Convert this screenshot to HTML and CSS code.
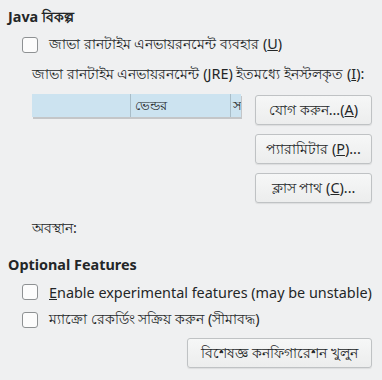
FILE: index.html
```html
<html>
<head>
	<title>Java Options</title>
	<link rel="stylesheet" href="styles.css">
</head>
<body>
	<div class="page">
		<div class="section-title">Java বিকল্প</div>

		<div class="check-row first">
			<span class="checkbox"></span>
			<span>জাভা রানটাইম এনভায়রনমেন্ট ব্যবহার (<u>U</u>)</span>
		</div>

		<div class="indent">
			<div class="jre-label">জাভা রানটাইম এনভায়রনমেন্ট (JRE) ইতমধ্যে ইনস্টলকৃত (<u>I</u>):</div>

			<div class="jre-area">
				<div class="jre-table">
					<div class="col col-first"></div>
					<div class="col col-vendor">ভেন্ডর</div>
					<div class="col col-last">স</div>
				</div>
				<div class="button-column">
					<div class="button">যোগ করুন...(<u>A</u>)</div>
					<div class="button">প্যারামিটার (<u>P</u>)...</div>
					<div class="button">ক্লাস পাথ (<u>C</u>)...</div>
				</div>
			</div>

			<div class="location">অবস্থান:</div>
		</div>

		<div class="section-title second">Optional Features</div>

		<div class="check-row">
			<span class="checkbox"></span>
			<span><u>E</u>nable experimental features (may be unstable)</span>
		</div>
		<div class="check-row">
			<span class="checkbox"></span>
			<span>ম্যাক্রো রেকর্ডিং সক্রিয় করুন (সীমাবদ্ধ)</span>
		</div>

		<div class="bottom-row">
			<div class="button wide">বিশেষজ্ঞ কনফিগারেশন খুলুন</div>
		</div>
	</div>
</body>
</html>
```

FILE: styles.css
```css
html, body {
	margin: 0;
	padding: 0;
	background-color: #eff0f1;
}

.page {
	font-family: "Noto Sans", "Open Sans", sans-serif;
	font-size: 14.4px;
	color: #232627;
	padding: 5px 10px 0 8px;
	width: 364px;
	height: 375px;
	overflow: hidden;
}

.section-title {
	font-weight: bold;
	height: 24px;
	line-height: 24px;
}

.section-title.second {
	margin-top: 14px;
	height: 25px;
}

.check-row {
	display: flex;
	align-items: center;
	height: 28px;
	padding-left: 14px;
}

.check-row.first {
	height: 32px;
}

.checkbox {
	width: 14px;
	height: 14px;
	border: 1px solid #8e9193;
	border-radius: 3px;
	background-color: #fcfcfc;
	margin-right: 11px;
	flex: none;
}

.indent {
	padding-left: 24px;
}

.jre-label {
	height: 26px;
	line-height: 26px;
}

.jre-area {
	display: flex;
	justify-content: space-between;
	margin-top: 7px;
}

.jre-table {
	display: flex;
	width: 209px;
	height: 23px;
	background-color: #cce3f0;
	box-shadow: 1px 2px 0 #c4c6c8;
	font-size: 12.5px;
	line-height: 23px;
}

.col {
	border-right: 1px solid #a9bdc8;
	overflow: hidden;
	white-space: nowrap;
}

.col-first {
	width: 98px;
}

.col-vendor {
	width: 95px;
	padding-left: 4px;
}

.col-last {
	border-right: none;
	padding-left: 2px;
	flex: 1;
}

.button-column {
	display: flex;
	flex-direction: column;
	gap: 9px;
	margin-top: 1px;
}

.button {
	width: 115px;
	height: 28px;
	line-height: 28px;
	text-align: center;
	border: 1px solid #bfc2c4;
	border-radius: 3px;
	background: linear-gradient(#f6f7f7, #eceded);
	box-shadow: 0 1px 1px rgba(0, 0, 0, 0.08);
}

.location {
	margin-top: 14px;
	height: 22px;
	line-height: 22px;
}

.bottom-row {
	display: flex;
	justify-content: flex-end;
	margin-top: 4px;
}

.button.wide {
	width: 183px;
}
```
